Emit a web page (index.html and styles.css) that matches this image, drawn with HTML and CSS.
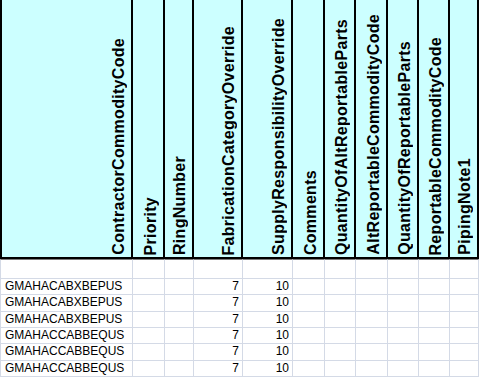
FILE: index.html
```html
<!DOCTYPE html>
<html>
<head>
<meta charset="utf-8">
<link rel="stylesheet" href="styles.css">
</head>
<body>
<div class="sheet">
  <div class="h first"><span>ContractorCommodityCode</span></div>
  <div class="h"><span>Priority</span></div>
  <div class="h"><span>RingNumber</span></div>
  <div class="h"><span>FabricationCategoryOverride</span></div>
  <div class="h"><span>SupplyResponsibilityOverride</span></div>
  <div class="h"><span>Comments</span></div>
  <div class="h"><span>QuantityOfAltReportableParts</span></div>
  <div class="h"><span>AltReportableCommodityCode</span></div>
  <div class="h"><span>QuantityOfReportableParts</span></div>
  <div class="h"><span>ReportableCommodityCode</span></div>
  <div class="h"><span>PipingNote1</span></div>

  <div class="c blank first"></div><div class="c blank"></div><div class="c blank"></div><div class="c blank"></div><div class="c blank"></div><div class="c blank"></div><div class="c blank"></div><div class="c blank"></div><div class="c blank"></div><div class="c blank"></div><div class="c blank"></div>

  <div class="c first">GMAHACABXBEPUS</div><div class="c"></div><div class="c"></div><div class="c num">7</div><div class="c num">10</div><div class="c"></div><div class="c"></div><div class="c"></div><div class="c"></div><div class="c"></div><div class="c"></div>
  <div class="c first">GMAHACABXBEPUS</div><div class="c"></div><div class="c"></div><div class="c num">7</div><div class="c num">10</div><div class="c"></div><div class="c"></div><div class="c"></div><div class="c"></div><div class="c"></div><div class="c"></div>
  <div class="c first">GMAHACABXBEPUS</div><div class="c"></div><div class="c"></div><div class="c num">7</div><div class="c num">10</div><div class="c"></div><div class="c"></div><div class="c"></div><div class="c"></div><div class="c"></div><div class="c"></div>
  <div class="c first">GMAHACCABBEQUS</div><div class="c"></div><div class="c"></div><div class="c num">7</div><div class="c num">10</div><div class="c"></div><div class="c"></div><div class="c"></div><div class="c"></div><div class="c"></div><div class="c"></div>
  <div class="c first">GMAHACCABBEQUS</div><div class="c"></div><div class="c"></div><div class="c num">7</div><div class="c num">10</div><div class="c"></div><div class="c"></div><div class="c"></div><div class="c"></div><div class="c"></div><div class="c"></div>
  <div class="c first">GMAHACCABBEQUS</div><div class="c"></div><div class="c"></div><div class="c num">7</div><div class="c num">10</div><div class="c"></div><div class="c"></div><div class="c"></div><div class="c"></div><div class="c"></div><div class="c"></div>
</div>
</body>
</html>
```

FILE: styles.css
```css
html, body {
  margin: 0;
  padding: 0;
  background: #ffffff;
}

.sheet {
  display: grid;
  grid-template-columns: 133px 32px 29px 49px 50px 32px 31px 32px 31px 31px 29px;
  grid-template-rows: 259px 20px 16px 17px 16px 16px 17px 16px;
  font-family: "Liberation Sans", Arial, sans-serif;
  color: #000;
}

.h {
  box-sizing: border-box;
  background: #ccffff;
  border-right: 2px solid #000;
  border-bottom: 2px solid #000;
  display: flex;
  justify-content: flex-end;
  align-items: flex-end;
  padding: 0 3px 2px 0;
  overflow: hidden;
}

.h.first {
  border-left: 2px solid #000;
}

.h span {
  writing-mode: vertical-rl;
  transform: rotate(180deg);
  font-weight: bold;
  font-size: 16px;
  line-height: 18px;
  letter-spacing: 0.3px;
  white-space: nowrap;
}

.c {
  box-sizing: border-box;
  border-right: 1px solid #d4dae6;
  border-bottom: 1px solid #d4dae6;
  font-size: 12px;
  line-height: 15px;
  white-space: nowrap;
  overflow: hidden;
}

.c.blank {
  border-top: 1px solid #7a7a7a;
}

.c.first {
  border-left: 1px solid #d4dae6;
  padding-left: 4px;
}

.c.num {
  text-align: right;
  padding-right: 3px;
}
```
